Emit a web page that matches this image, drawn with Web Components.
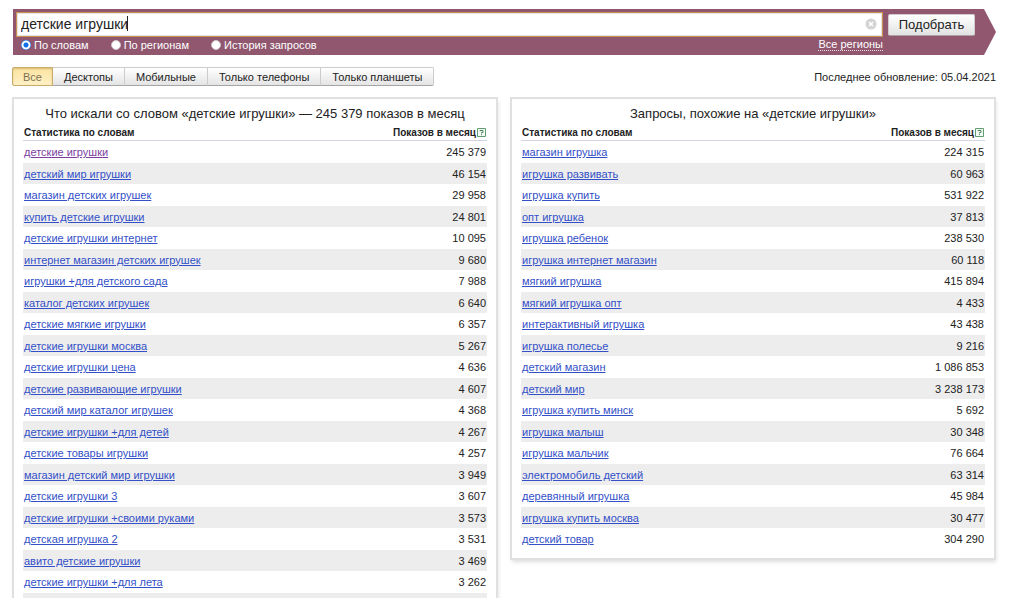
<!DOCTYPE html>
<html lang="ru">
<head>
<meta charset="utf-8">
<title>Подбор слов</title>
<style>
html { background: #fff; scrollbar-width: none; }
body { margin: 0; font-family: "Liberation Sans", Arial, sans-serif; font-size: 11px; line-height: 14px; color: #222; }
</style>
</head>
<body>
<word-stat></word-stat>
<script>
const define = (name, html, setup) => customElements.define(name, class extends HTMLElement {
  connectedCallback() {
    if (this.shadowRoot) return;
    const t = document.createElement('template');
    t.innerHTML = html;
    this.attachShadow({ mode: 'open' }).append(t.content.cloneNode(true));
    if (setup) setup(this, this.shadowRoot);
  }
});

define('search-ribbon', `
<style>
:host { display: block; padding-left: 1px; }
form { display: grid; grid-template-columns: 1fr auto; column-gap: 5px; margin: 0; padding: 3px 21px 3px 3px; background: #91576f; clip-path: polygon(0 0, calc(100% - 12px) 0, 100% 50%, calc(100% - 12px) 100%, 0 100%); color: #fff; }
.field { position: relative; display: flex; }
input[type=text] { flex: 1; min-width: 0; box-sizing: border-box; height: 25px; margin: 0; padding: 0 28px 2px 4px; border: 1px solid #c9924e; border-radius: 0; outline: none; background: #fff; box-shadow: inset 0 0 0 1px #e4e2e4; font: 14px "Liberation Sans", Arial, sans-serif; color: #222; }
.caret { position: absolute; left: 111px; top: 4px; width: 1px; height: 15px; background: #222; }
.clear { position: absolute; right: 6px; top: 6px; width: 12px; height: 12px; padding: 0; border: 0; background: none; }
.clear svg { display: block; }
.go { align-self: center; height: 22px; width: 87px; padding: 0; border: 1px solid #d2ccd0; border-bottom-color: #a9a1a6; border-radius: 2px; background: linear-gradient(#fff, #e2e2e2); font: 13px "Liberation Sans", Arial, sans-serif; color: #222; }
.modes { display: flex; align-items: center; height: 15px; padding-left: 5px; }
label { display: flex; align-items: center; gap: 3px; margin-right: 22px; }
input[type=radio] { appearance: none; box-sizing: border-box; width: 10px; height: 10px; margin: 0; border: 1px solid #d0c4ca; border-radius: 50%; background: #fff; }
input[type=radio]:checked { border: 0; background: radial-gradient(circle at center, #0a6fe8 2px, #fff 3px, #fff 4px, #0a6fe8 5px); }
a { margin-left: auto; color: #fff; text-decoration: none; line-height: 12px; border-bottom: 1px dotted #e8dbe1; }
</style>
<form onsubmit="return false">
  <div class="field">
    <input type="text" value="детские игрушки" aria-label="Запрос"><span class="caret"></span>
    <button class="clear" type="button" aria-label="Очистить"><svg width="12" height="12" viewBox="0 0 12 12"><circle cx="6" cy="6" r="5.5" fill="#d3d3d3"/><path d="M4 4l4 4M8 4l-4 4" stroke="#fff" stroke-width="1.6"/></svg></button>
  </div>
  <button class="go">Подобрать</button>
  <div class="modes">
    <label><input type="radio" name="m" checked>По словам</label>
    <label><input type="radio" name="m">По регионам</label>
    <label><input type="radio" name="m">История запросов</label>
    <a href="#regions">Все регионы</a>
  </div>
</form>`);

define('device-tabs', `
<style>
:host { display: flex; }
button { box-sizing: border-box; height: 19px; padding: 0 11px; margin: 0; border: 1px solid #ccc; border-left-width: 0; border-bottom-color: #a5a5a5; background: linear-gradient(#fff, #e4e4e4); font: 11px "Liberation Sans", Arial, sans-serif; color: #222; }
button[aria-pressed=true] { padding: 0 10px; border: 1px solid #c9ab6b; border-radius: 2px 0 0 2px; background: linear-gradient(#fbe3a0, #fff1c6); box-shadow: inset 0 1px 2px #d8bb74; color: #7d7252; }
button:last-child { border-radius: 0 2px 2px 0; }
</style>
<button aria-pressed="true">Все</button><button>Десктопы</button><button>Мобильные</button><button>Только телефоны</button><button>Только планшеты</button>`);

define('stat-panel', `
<style>
:host { display: block; box-sizing: border-box; min-width: 0; padding: 6px 9px 8px 9px; border: 2px solid #e0e0e0; background: #fff; box-shadow: 1px 3px 4px -1px #ddd; }
h2 { margin: 0; font-size: 13px; line-height: 17px; font-weight: normal; text-align: center; }
table { width: 100%; border-collapse: separate; border-spacing: 0; }
th { height: 19px; padding: 4px 1px 0; box-sizing: border-box; border-bottom: 1px solid #d5d5e5; font-size: 10px; line-height: 14px; text-align: left; color: #222; }
th:last-child, td:last-child { text-align: right; }
th svg { margin-left: 1px; vertical-align: -1px; }
td { box-sizing: border-box; height: 22px; padding: 0 1px; line-height: 14px; }
tr:nth-child(even) td { height: 21px; background: #ededed; }
a { color: #3350c8; }
a.seen { color: #7b3fa0; }
</style>
<h2><slot></slot></h2>
<table>
<thead><tr><th scope="col">Статистика по словам</th><th scope="col">Показов в месяц<svg width="9" height="9" viewBox="0 0 9 9"><path d="M.5.5h8v8h-8z" fill="#f4fbf5" stroke="#5f9c70"/><path d="M3 3.2V2.5h3v2H4.5v1M4.5 6.2v1" fill="none" stroke="#4d8a5e"/></svg></th></tr></thead>
<tbody></tbody>
</table>`, (host, root) => {
  const body = root.querySelector('tbody');
  for (const [phrase, count, seen] of lists[host.getAttribute('list')]) {
    const row = body.insertRow();
    const cell = row.insertCell();
    if (phrase) {
      const a = document.createElement('a');
      a.href = '#' + phrase;
      a.textContent = phrase;
      if (seen) a.className = 'seen';
      cell.append(a);
    }
    row.insertCell().textContent = count;
  }
});

const lists = {
  words: [
    ['детские игрушки', '245 379', true], ['детский мир игрушки', '46 154'], ['магазин детских игрушек', '29 958'],
    ['купить детские игрушки', '24 801'], ['детские игрушки интернет', '10 095'], ['интернет магазин детских игрушек', '9 680'],
    ['игрушки +для детского сада', '7 988'], ['каталог детских игрушек', '6 640'], ['детские мягкие игрушки', '6 357'],
    ['детские игрушки москва', '5 267'], ['детские игрушки цена', '4 636'], ['детские развивающие игрушки', '4 607'],
    ['детский мир каталог игрушек', '4 368'], ['детские игрушки +для детей', '4 267'], ['детские товары игрушки', '4 257'],
    ['магазин детский мир игрушки', '3 949'], ['детские игрушки 3', '3 607'], ['детские игрушки +своими руками', '3 573'],
    ['детская игрушка 2', '3 531'], ['авито детские игрушки', '3 469'], ['детские игрушки +для лета', '3 262'], ['', '']
  ],
  similar: [
    ['магазин игрушка', '224 315'], ['игрушка развивать', '60 963'], ['игрушка купить', '531 922'], ['опт игрушка', '37 813'],
    ['игрушка ребенок', '238 530'], ['игрушка интернет магазин', '60 118'], ['мягкий игрушка', '415 894'],
    ['мягкий игрушка опт', '4 433'], ['интерактивный игрушка', '43 438'], ['игрушка полесье', '9 216'],
    ['детский магазин', '1 086 853'], ['детский мир', '3 238 173'], ['игрушка купить минск', '5 692'], ['игрушка малыш', '30 348'],
    ['игрушка мальчик', '76 664'], ['электромобиль детский', '63 314'], ['деревянный игрушка', '45 984'],
    ['игрушка купить москва', '30 477'], ['детский товар', '304 290']
  ]
};

define('word-stat', `
<style>
:host { display: block; padding: 9px 28px 0 12px; }
.bar { display: flex; justify-content: space-between; align-items: center; padding: 12px 0 11px; }
main { display: grid; grid-template-columns: 1fr 1fr; column-gap: 12px; align-items: start; }
</style>
<search-ribbon></search-ribbon>
<div class="bar"><device-tabs></device-tabs><span>Последнее обновление: 05.04.2021</span></div>
<main>
<stat-panel list="words">Что искали со словом «детские игрушки» — 245 379 показов в месяц</stat-panel>
<stat-panel list="similar">Запросы, похожие на «детские игрушки»</stat-panel>
</main>`);
</script>
</body>
</html>
